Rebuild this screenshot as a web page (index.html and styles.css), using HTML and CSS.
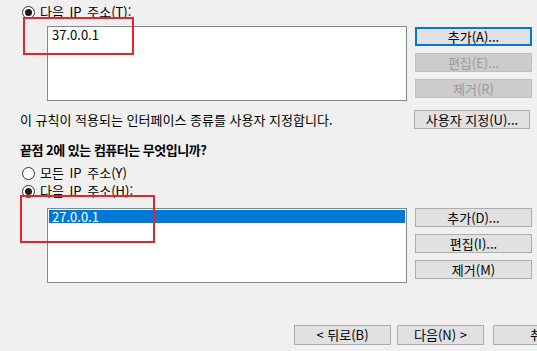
FILE: index.html
```html
<!DOCTYPE html>
<html lang="ko">
<head>
<meta charset="utf-8">
<link rel="stylesheet" href="styles.css">
</head>
<body>
<div class="page">
  <div class="radio-row r-top">
    <span class="radio checked"></span><span>다음 IP 주소(T):</span>
  </div>
  <div class="list-row l1">
    <div class="listbox">
      <div class="item">37.0.0.1</div>
    </div>
    <div class="btn-col">
      <button class="btn focused">추가(A)...</button>
      <button class="btn disabled">편집(E)...</button>
      <button class="btn disabled">제거(R)</button>
    </div>
  </div>
  <div class="custom-row">
    <span class="desc">이 규칙이 적용되는 인터페이스 종류를 사용자 지정합니다.</span>
    <button class="btn custom">사용자 지정(U)...</button>
  </div>
  <div class="question">끝점 2에 있는 컴퓨터는 무엇입니까?</div>
  <div class="radio-row r-any">
    <span class="radio"></span><span>모든 IP 주소(Y)</span>
  </div>
  <div class="radio-row r-next">
    <span class="radio checked"></span><span>다음 IP 주소(H):</span>
  </div>
  <div class="list-row l2">
    <div class="listbox">
      <div class="item selected">27.0.0.1</div>
    </div>
    <div class="btn-col">
      <button class="btn">추가(D)...</button>
      <button class="btn">편집(I)...</button>
      <button class="btn">제거(M)</button>
    </div>
  </div>
  <div class="nav-row">
    <button class="btn back">&lt; 뒤로(B)</button>
    <button class="btn next">다음(N) &gt;</button>
    <button class="btn cancel">취소</button>
  </div>
  <div class="mark mark1"></div>
  <div class="mark mark2"></div>
</div>
</body>
</html>
```
FILE: styles.css
```css
html, body {
  margin: 0;
  padding: 0;
  background: #f0f0f0;
  overflow: hidden;
}
body {
  width: 537px;
  height: 351px;
  font-family: "Noto Sans CJK KR", "Noto Sans", sans-serif;
  font-size: 13px;
  line-height: 14px;
  color: #000;
}
.page {
  position: relative;
  width: 537px;
  height: 351px;
  overflow: hidden;
}
.radio-row {
  display: flex;
  align-items: center;
  gap: 5px;
  margin-left: 22px;
  height: 14px;
  word-spacing: 2px;
}
.radio {
  box-sizing: border-box;
  width: 13px;
  height: 13px;
  border: 1px solid #333;
  border-radius: 50%;
  background: #fff;
  display: flex;
  align-items: center;
  justify-content: center;
  flex: none;
}
.radio.checked::after {
  content: "";
  width: 7px;
  height: 7px;
  border-radius: 50%;
  background: #1a1a1a;
}
.r-top { margin-top: 5px; }
.list-row {
  display: flex;
  gap: 8px;
  margin-left: 47px;
}
.l1 { margin-top: 7px; }
.listbox {
  box-sizing: border-box;
  width: 360px;
  height: 75px;
  border: 1px solid #828790;
  background: #fff;
  padding: 1px;
}
.item {
  height: 13px;
  line-height: 13px;
  padding-left: 3px;
}
.item.selected {
  background: #0078d7;
  color: #fff;
}
.btn-col {
  display: flex;
  flex-direction: column;
  gap: 7px;
  padding-top: 1px;
}
.btn {
  box-sizing: border-box;
  width: 117px;
  height: 19px;
  margin: 0;
  padding: 0;
  border: 1px solid #adadad;
  background: #e1e1e1;
  font: inherit;
  line-height: 16px;
  color: #000;
  text-align: center;
}
.btn.focused {
  border: 2px solid #0078d7;
  line-height: 14px;
}
.btn.disabled {
  border-color: #bfbfbf;
  background: #cccccc;
  color: #9a9a9a;
}
.custom-row {
  display: flex;
  align-items: center;
  justify-content: space-between;
  margin-top: 9px;
  margin-left: 20px;
  width: 510px;
}
.btn.custom {
  width: 116px;
  height: 19px;
}
.question {
  font-weight: bold;
  letter-spacing: -0.5px;
  margin-top: 14px;
  margin-left: 20px;
  height: 14px;
  line-height: 14px;
}
.r-any { margin-top: 9px; }
.r-next { margin-top: 4px; }
.l2 { margin-top: 10px; }
.l2 .btn-col { padding-top: 0; gap: 7px; }
.nav-row {
  display: flex;
  gap: 6px;
  margin-top: 42px;
  margin-left: 294px;
}
.btn.back { width: 97px; height: 20px; flex: none; }
.btn.next { width: 87px; height: 20px; flex: none; }
.btn.cancel { width: 87px; height: 20px; flex: none; margin-left: 3px; text-align: left; padding-left: 36px; }
.mark {
  position: absolute;
  box-sizing: border-box;
  border: 2px solid #e8212b;
}
.mark1 { left: 23px; top: 17px; width: 111px; height: 38px; }
.mark2 { left: 20px; top: 195px; width: 135px; height: 48px; }
```
